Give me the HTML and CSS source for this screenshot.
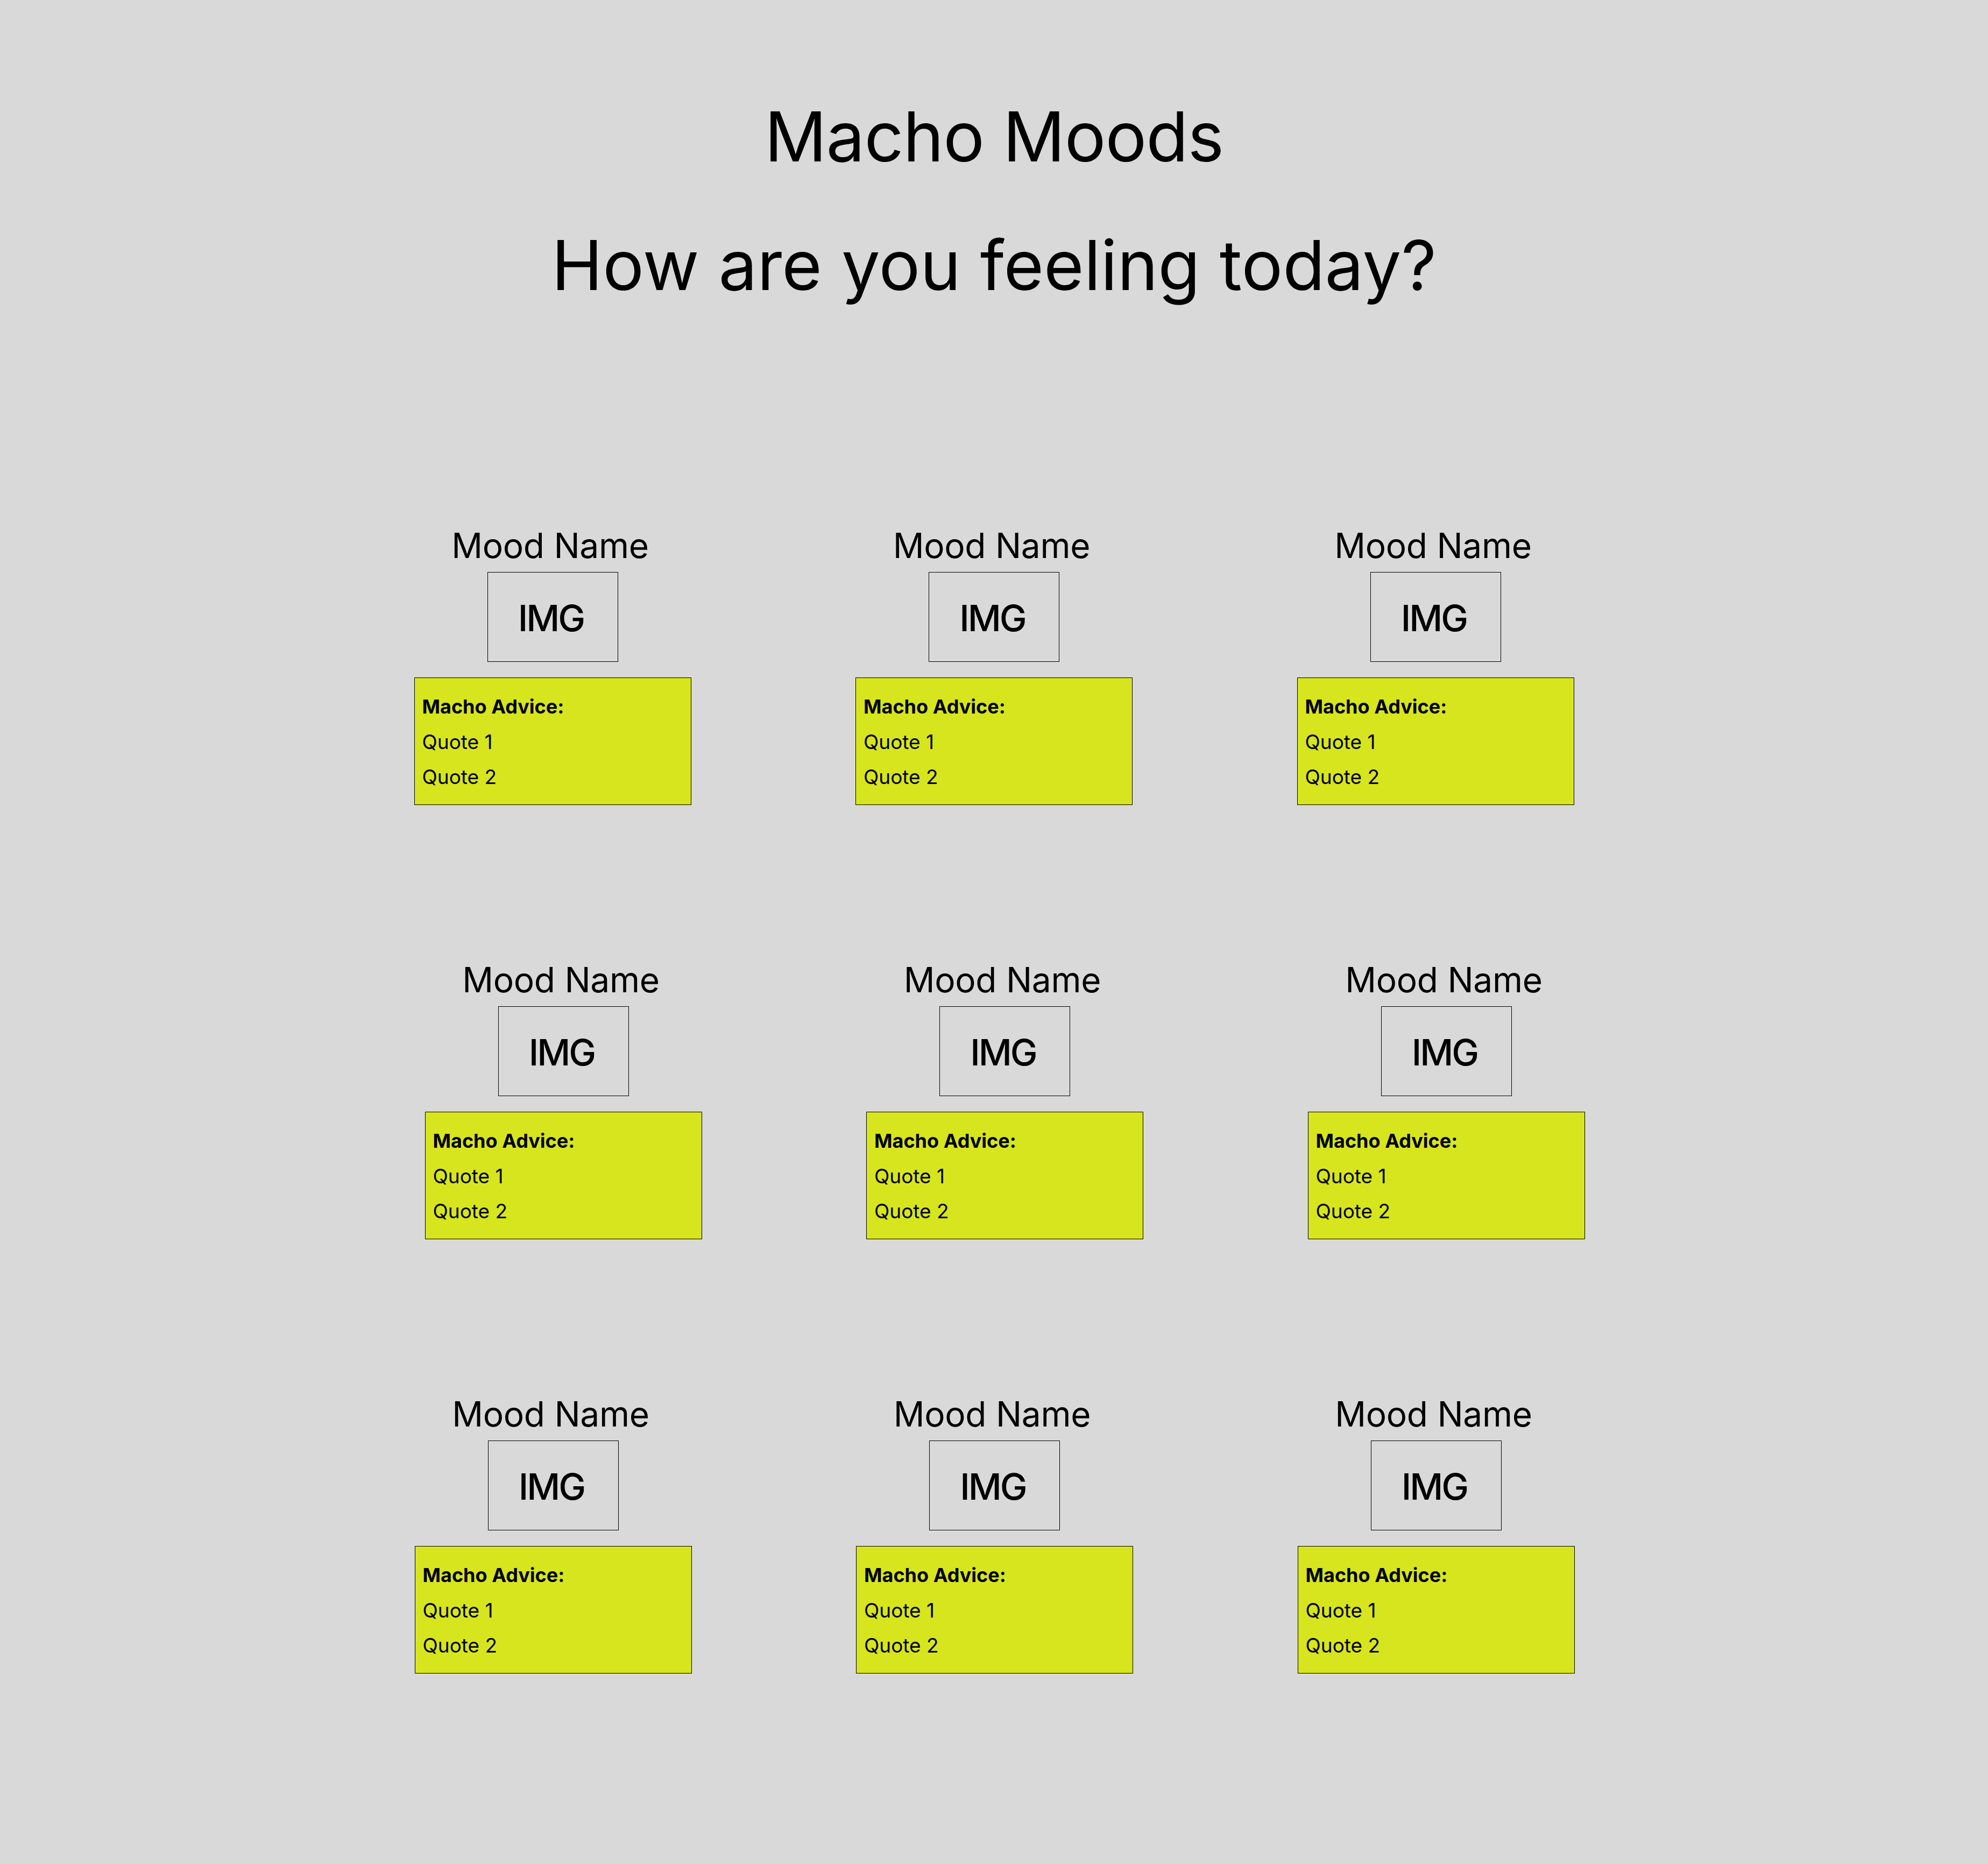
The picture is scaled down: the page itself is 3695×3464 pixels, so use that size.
FILE: index.html
```html
<!DOCTYPE html>
<html lang="en">
<head>
<meta charset="utf-8">
<title>Macho Moods</title>
<link rel="stylesheet" href="styles.css">
</head>
<body>
<main class="page">
  <header class="heading">
    <h1 class="title">Macho Moods</h1>
    <h2 class="subtitle">How are you feeling today?</h2>
  </header>
  <section class="moods">
    <div class="mood-row">
      <article class="mood-card"><h3 class="mood-name">Mood Name</h3><div class="mood-img">IMG</div><div class="advice"><p class="advice-title">Macho Advice:</p><p>Quote 1</p><p>Quote 2</p></div></article>
      <article class="mood-card"><h3 class="mood-name">Mood Name</h3><div class="mood-img">IMG</div><div class="advice"><p class="advice-title">Macho Advice:</p><p>Quote 1</p><p>Quote 2</p></div></article>
      <article class="mood-card"><h3 class="mood-name">Mood Name</h3><div class="mood-img">IMG</div><div class="advice"><p class="advice-title">Macho Advice:</p><p>Quote 1</p><p>Quote 2</p></div></article>
    </div>
    <div class="mood-row mood-row--shift">
      <article class="mood-card"><h3 class="mood-name">Mood Name</h3><div class="mood-img">IMG</div><div class="advice"><p class="advice-title">Macho Advice:</p><p>Quote 1</p><p>Quote 2</p></div></article>
      <article class="mood-card"><h3 class="mood-name">Mood Name</h3><div class="mood-img">IMG</div><div class="advice"><p class="advice-title">Macho Advice:</p><p>Quote 1</p><p>Quote 2</p></div></article>
      <article class="mood-card"><h3 class="mood-name">Mood Name</h3><div class="mood-img">IMG</div><div class="advice"><p class="advice-title">Macho Advice:</p><p>Quote 1</p><p>Quote 2</p></div></article>
    </div>
    <div class="mood-row mood-row--nudge">
      <article class="mood-card"><h3 class="mood-name">Mood Name</h3><div class="mood-img">IMG</div><div class="advice"><p class="advice-title">Macho Advice:</p><p>Quote 1</p><p>Quote 2</p></div></article>
      <article class="mood-card"><h3 class="mood-name">Mood Name</h3><div class="mood-img">IMG</div><div class="advice"><p class="advice-title">Macho Advice:</p><p>Quote 1</p><p>Quote 2</p></div></article>
      <article class="mood-card"><h3 class="mood-name">Mood Name</h3><div class="mood-img">IMG</div><div class="advice"><p class="advice-title">Macho Advice:</p><p>Quote 1</p><p>Quote 2</p></div></article>
    </div>
  </section>
</main>
</body>
</html>
```

FILE: styles.css
```css
html, body {
  margin: 0;
  background: #d9d9d9;
}

body {
  font-family: Inter, "Noto Sans", sans-serif;
  color: #000;
}

.page {
  box-sizing: border-box;
  min-height: 3464px;
  padding-top: 176px;
}

.title,
.subtitle {
  margin: 0;
  font-size: 128px;
  font-weight: 400;
  line-height: 155px;
  text-align: center;
}

.title {
  letter-spacing: -1px;
}

.subtitle {
  margin-top: 84px;
}

.moods {
  margin-top: 405px;
  display: flex;
  flex-direction: column;
  gap: 286px;
}

.mood-row {
  display: flex;
  justify-content: center;
  gap: 305.5px;
}

.mood-row--shift {
  padding-left: 40px;
}

.mood-row--nudge {
  padding-left: 2px;
}

.mood-card {
  width: 515px;
  display: flex;
  flex-direction: column;
  align-items: center;
}

.mood-name {
  margin: 0;
  padding-right: 9px;
  font-size: 64px;
  font-weight: 400;
  line-height: 77px;
  letter-spacing: -0.3px;
}

.mood-img {
  box-sizing: border-box;
  margin-top: 11px;
  width: 243px;
  height: 167px;
  border: 1px solid #000;
  display: flex;
  align-items: center;
  justify-content: center;
  font-size: 68px;
  font-weight: 500;
  letter-spacing: -3px;
  padding: 3px 6px 0 0;
}

.advice {
  box-sizing: border-box;
  align-self: stretch;
  margin-top: 29px;
  padding: 21px 14px 19px;
  background: #d7e51e;
  border: 1px solid #000;
}

.advice p {
  margin: 0;
  font-size: 37px;
  line-height: 65px;
}

.advice .advice-title {
  font-size: 36px;
  font-weight: 700;
}
```
